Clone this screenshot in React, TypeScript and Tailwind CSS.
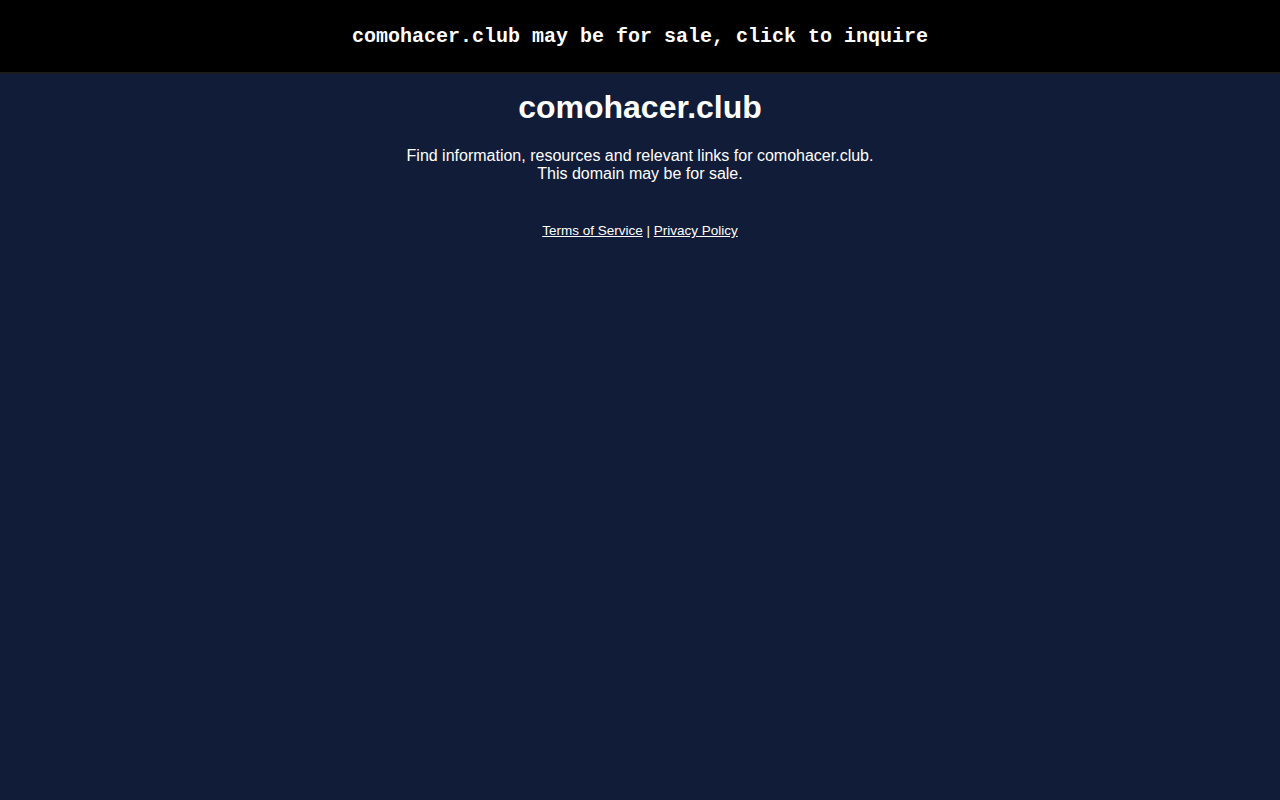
export default function App() {
  return (
    <div className="min-h-screen bg-[#111c38] text-white font-['Liberation_Sans',Arial,sans-serif]">
      <div className="h-[74px] pt-[2px] bg-black border-b-2 border-[#1c1c1c] flex items-center justify-center">
        <a className="font-['Liberation_Mono',monospace] font-bold text-[20px] text-white cursor-pointer">
          comohacer.club may be for sale, click to inquire
        </a>
      </div>
      <div className="flex flex-col items-center text-center">
        <h1 className="mt-[15px] text-[32px] font-bold leading-[37px]">comohacer.club</h1>
        <p className="mt-[21px] text-[16px] leading-[18px]">
          Find information, resources and relevant links for comohacer.club.
          <br />
          This domain may be for sale.
        </p>
        <div className="mt-[40px] text-[13.5px] leading-[15px]">
          <a className="underline cursor-pointer">Terms of Service</a> |{" "}
          <a className="underline cursor-pointer">Privacy Policy</a>
        </div>
      </div>
    </div>
  );
}
